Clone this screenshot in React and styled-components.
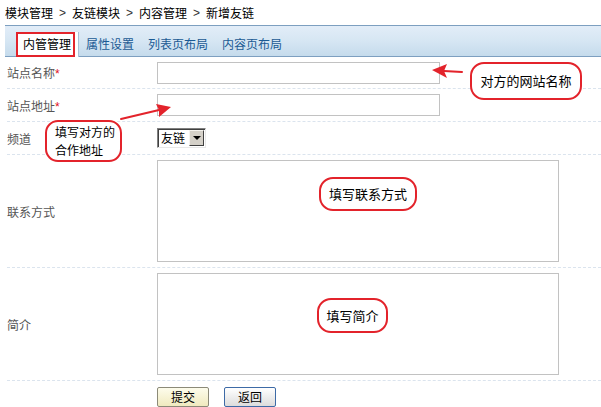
import React from "react";
import styled, { createGlobalStyle } from "styled-components";

const Global = createGlobalStyle`
  html, body { margin: 0; padding: 0; background: #fff; }
  body { font-family: "Noto Sans CJK SC", "Liberation Sans", sans-serif; font-size: 12px; color: #000; }
`;

const Page = styled.div`
  position: relative;
  width: 601px;
  height: 407px;
  overflow: hidden;
  padding-left: 5px;
  box-sizing: border-box;
`;

const Crumbs = styled.div`
  height: 25px;
  display: flex;
  align-items: center;
  font-size: 12px;
  color: #000;
`;

const Sep = styled.span`
  font-family: "Liberation Sans", sans-serif;
  margin: 0 6px 0 6px;
  color: #333;
`;

const TabBar = styled.div`
  height: 30px;
  display: flex;
  align-items: flex-end;
  padding-left: 11px;
  border-top: 1px solid #7d9fc0;
  border-bottom: 1px solid #7d9fc0;
  background: linear-gradient(#e2edf8 0%, #d6e6f3 50%, #c5dbec 100%);
`;

const Tab = styled.div`
  position: relative;
  line-height: 23px;
  padding: 0 7px;
  margin-bottom: ${(p) => (p.$active ? "-1px" : "0")};
  height: ${(p) => (p.$active ? "25px" : "24px")};
  background: ${(p) => (p.$active ? "#fff" : "transparent")};
  border-right: ${(p) => (p.$active ? "1px solid #a9c1d8" : "none")};
  color: ${(p) => (p.$active ? "#000" : "#1b5a94")};
  font-size: 12px;
  white-space: nowrap;
`;

const TabMark = styled.span`
  position: absolute;
  left: 0;
  top: 0;
  width: 59px;
  height: 25px;
  box-sizing: border-box;
  border: 2px solid #e3232b;
`;

const Form = styled.div`
  margin-left: 2px;
`;

const Row = styled.div`
  display: flex;
  align-items: center;
  min-height: ${(p) => p.$h || 31}px;
  border-bottom: 1px dashed #dbe4ee;
  &:last-child { border-bottom: none; }
`;

const Label = styled.div`
  width: 150px;
  flex: none;
  color: #555;
  font-size: 12px;
`;

const Star = styled.span`
  color: #e0101a;
  font-family: "Liberation Sans", sans-serif;
`;

const Field = styled.div`
  display: flex;
  align-items: center;
  gap: 15px;
`;

const TextInput = styled.div`
  width: 283px;
  height: 22px;
  box-sizing: border-box;
  border: 1px solid #c2c2c2;
  background: #fff;
`;

const TextArea = styled.div`
  width: 402px;
  height: 102px;
  box-sizing: border-box;
  border: 1px solid #c2c2c2;
  background: #fff;
`;

const Select = styled.div`
  width: 49px;
  height: 20px;
  box-sizing: border-box;
  display: flex;
  align-items: stretch;
  border-top: 1px solid #808080;
  border-left: 1px solid #808080;
  border-right: 1px solid #e8e8e8;
  border-bottom: 1px solid #e8e8e8;
  box-shadow: inset 1px 1px 0 #404040;
  background: #fff;
`;

const SelectText = styled.span`
  flex: 1;
  padding-left: 3px;
  line-height: 18px;
  font-size: 12px;
`;

const SelectBtn = styled.span`
  width: 15px;
  margin: 1px 1px 1px 0;
  box-sizing: border-box;
  background: #d4d0c8;
  border-top: 1px solid #f4f2ee;
  border-left: 1px solid #f4f2ee;
  border-right: 1px solid #404040;
  border-bottom: 1px solid #404040;
  display: flex;
  align-items: center;
  justify-content: center;
`;

const Caret = styled.span`
  width: 0;
  height: 0;
  border-left: 4px solid transparent;
  border-right: 4px solid transparent;
  border-top: 4px solid #000;
`;

const Button = styled.button`
  width: 52px;
  height: 20px;
  padding: 0;
  margin-top: 5px;
  font-family: "Noto Sans CJK SC", sans-serif;
  font-size: 12px;
  line-height: 16px;
  color: #000;
  border-radius: 2px;
  border: 1px solid ${(p) => (p.$primary ? "#8c8a78" : "#3d6aa6")};
  background: ${(p) =>
    p.$primary
      ? "linear-gradient(#fdfcec, #f0eabf)"
      : "linear-gradient(#ffffff, #dcdcdc)"};
`;

const Callout = styled.div`
  position: absolute;
  left: ${(p) => p.$x}px;
  top: ${(p) => p.$y}px;
  width: ${(p) => p.$w}px;
  height: ${(p) => p.$h}px;
  box-sizing: border-box;
  border: 2px solid #e3232b;
  border-radius: ${(p) => p.$r || 14}px;
  background: #fff;
  display: flex;
  flex-direction: column;
  justify-content: center;
  align-items: ${(p) => (p.$left ? "flex-start" : "center")};
  padding-left: ${(p) => (p.$left ? "8px" : "0")};
  font-size: ${(p) => (p.$left ? "12px" : "13px")};
  line-height: ${(p) => (p.$left ? "18px" : "16px")};
  color: #000;
  white-space: nowrap;
`;

const Arrows = styled.svg`
  position: absolute;
  left: 0;
  top: 0;
  pointer-events: none;
`;

export default function App() {
  return (
    <>
      <Global />
      <Page>
        <Crumbs>
          模块管理<Sep>&gt;</Sep>友链模块<Sep>&gt;</Sep>内容管理<Sep>&gt;</Sep>新增友链
        </Crumbs>
        <TabBar>
          <Tab $active>
            内管管理
            <TabMark />
          </Tab>
          <Tab>属性设置</Tab>
          <Tab>列表页布局</Tab>
          <Tab>内容页布局</Tab>
        </TabBar>
        <Form>
          <Row>
            <Label>
              站点名称<Star>*</Star>
            </Label>
            <Field>
              <TextInput />
            </Field>
          </Row>
          <Row $h={32}>
            <Label>
              站点地址<Star>*</Star>
            </Label>
            <Field>
              <TextInput />
            </Field>
          </Row>
          <Row $h={32}>
            <Label>频道</Label>
            <Field>
              <Select>
                <SelectText>友链</SelectText>
                <SelectBtn>
                  <Caret />
                </SelectBtn>
              </Select>
            </Field>
          </Row>
          <Row $h={112}>
            <Label>联系方式</Label>
            <Field>
              <TextArea />
            </Field>
          </Row>
          <Row $h={112}>
            <Label>简介</Label>
            <Field>
              <TextArea />
            </Field>
          </Row>
          <Row $h={26}>
            <Label />
            <Field>
              <Button $primary>提交</Button>
              <Button>返回</Button>
            </Field>
          </Row>
        </Form>

        <Arrows width="601" height="407" viewBox="0 0 601 407">
          <g stroke="#e3232b" strokeWidth="2" fill="#e3232b" strokeLinecap="round">
            <line x1="462" y1="72" x2="444" y2="71" />
            <polygon points="432,70 447,64 444,71 447,78" stroke="none" />
            <line x1="121" y1="119" x2="159" y2="110" />
            <polygon points="171,107 156,104 159,110 159,117" stroke="none" />
          </g>
        </Arrows>

        <Callout $x={470} $y={62} $w={112} $h={38}>
          对方的网站名称
        </Callout>
        <Callout $x={45} $y={120} $w={77} $h={42} $r={13} $left>
          <span>填写对方的</span>
          <span>合作地址</span>
        </Callout>
        <Callout $x={319} $y={177} $w={98} $h={34}>
          填写联系方式
        </Callout>
        <Callout $x={317} $y={298} $w={71} $h={35}>
          填写简介
        </Callout>
      </Page>
    </>
  );
}
